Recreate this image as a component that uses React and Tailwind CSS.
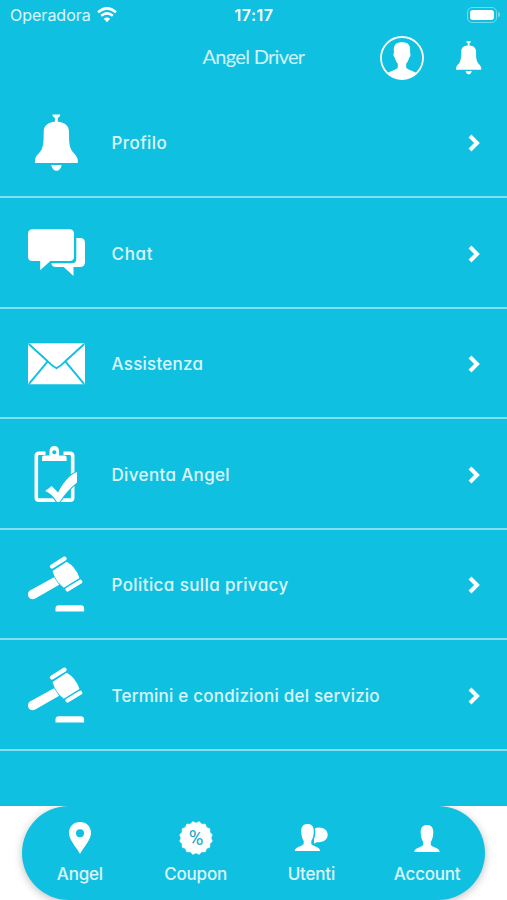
import { clsx } from 'clsx';

const BellIcon = ({ className }) => (
  <svg viewBox="0 0 58 58" fill="currentColor" className={className}>
    <path d="M24.3 0.5h8q0 2.2-2.5 3.5v3.7c7 .5 11 4 11.2 9.5.2 7-.4 13 2.3 18.500C45.500 40 49.800 42 49.800 46.500v2.500H7v-2.500c0-4.500 4.300-6.500 6.400-10.800 2.700-5.500 2.100-11.500 2.300-18.500.2-5.500 4.200-9 11.200-9.500V4q-2.600-1.300-2.600-3.500z" />
    <path d="M23.300 51h10.400c-.7 3.800-2.700 5.800-5.200 5.800S24 54.800 23.300 51z" />
  </svg>
);

const ChatIcon = ({ className }) => (
  <svg viewBox="0 0 58 58" fill="currentColor" className={className}>
    <path d="M48.300 13H52q5 0 5 5v19q0 5-5 5h-6.500v9l-9.800-9H28q-4.500 0-4.700-3.700h20.500q4.500 0 4.500-4.500z" />
    <path d="M4.500 4.200h37q4.500 0 4.500 4.500v22.800q0 4.500-4.500 4.500H22.300L12.200 45.300V36H4.500Q0 36 0 31.500V8.700Q0 4.200 4.500 4.200z" />
  </svg>
);

const MailIcon = ({ className }) => (
  <svg viewBox="0 0 58 58" className={className}>
    <rect y="8.300" width="57" height="41" rx="1.500" fill="currentColor" />
    <path d="M0.700 9l19 17.300q4.500 4.500 8.800 7 4.300-2.500 8.800-7L56.300 9M1 48.800l18.700-22.500M56 48.800L37.300 26.300" fill="none" stroke="#0fc0e1" strokeWidth="1.900" />
  </svg>
);

const ClipboardIcon = ({ className }) => (
  <svg viewBox="0 0 58 58" className={className}>
    <path d="M17.500 7.200H11q-2.700 0-2.700 2.700v41.500q0 2.700 2.700 2.700h31q2.700 0 2.700-2.700V9.900q0-2.700-2.700-2.700h-6.500" fill="none" stroke="currentColor" strokeWidth="3.600" />
    <path d="M14 15V11.500q0-2 2-2h5.500V5Q22 0 26.300 0t4.800 5v4.500h5.500q2 0 2 2V15z" fill="currentColor" />
    <circle cx="26.300" cy="6.300" r="2" fill="#0fc0e1" />
    <path d="M17.200 45l6.500-5 6.300 6.500c5.500-10.500 11.500-17.500 19-20.500v10.500C42 42 36.500 48.500 31.500 56H29C25.800 50.500 22 47 17.200 45z" fill="currentColor" stroke="#0fc0e1" strokeWidth="2.200" paintOrder="stroke" />
  </svg>
);

const GavelIcon = ({ className }) => (
  <svg viewBox="0 0 58 58" fill="currentColor" className={className}>
    <path d="M24.500 15L38.700 5.700Q48 11 51.500 22L35.800 31.700Q27.500 25.500 24.500 15z" />
    <path d="M24 10.500L36.500 2.600M39.500 33.500l12.700-7.700" fill="none" stroke="currentColor" strokeWidth="4.200" strokeLinecap="round" />
    <path d="M26 21.200l5.200 7.500L7.300 42.500q-4 2-6.500-1.300Q-1.500 37 2 34.500z" />
    <path d="M27.500 55.500v-3q0-3.300 3.300-3.300h22q3.300 0 3.300 3.300v3z" />
  </svg>
);

const PersonShape = () => (
  <path d="M13 0c4.200 0 6.400 2.500 6.300 7.500-.1 4.500-1.100 7.300-2.500 9.500v3c1.800 2.600 8.300 2.500 9 7H.2c.7-4.500 7.200-4.400 9-7v-3C7.800 14.800 6.800 12 6.700 7.500 6.600 2.500 8.800 0 13 0z" />
);

const AvatarIcon = ({ className }) => (
  <svg viewBox="0 0 44 44" className={className}>
    <clipPath id="avatar-clip">
      <circle cx="22" cy="22" r="21" />
    </clipPath>
    <circle cx="22" cy="22" r="21" fill="none" stroke="currentColor" strokeWidth="1.800" />
    <path clipPath="url(#avatar-clip)" fill="currentColor" d="M22 6.200c5.800 0 8.300 2.500 8.200 7.800l-.2 3c1 .5.500 4-.9 4.700-.6 2.800-1.700 4.500-2.900 6V31.500c1.500 3 8.800 3.500 11.800 7V44H6v-5.500c3-3.500 10.300-4 11.800-7v-3.800c-1.200-1.500-2.300-3.200-2.900-6-1.400-.7-1.900-4.200-.9-4.700l-.2-3c-.1-5.300 2.400-7.800 8.200-7.800z" />
  </svg>
);

const ChevronIcon = ({ className }) => (
  <svg viewBox="0 0 12 18" className={className}>
    <path d="M2 2l7 7-7 7" fill="none" stroke="currentColor" strokeWidth="4" />
  </svg>
);

const WifiIcon = ({ className }) => (
  <svg viewBox="0 0 20 16" className={className}>
    <path d="M1 5.300q9-7.800 18 0M4.200 8.800q5.800-4.800 11.600 0" fill="none" stroke="currentColor" strokeWidth="2.500" />
    <path d="M6.800 11.700q3.200-2.500 6.400 0L10 15.300z" fill="currentColor" />
  </svg>
);

const PinIcon = ({ className }) => (
  <svg viewBox="0 0 34 34" className={className}>
    <path fillRule="evenodd" fill="currentColor" d="M17 1c6.500 0 11 4.600 11 10.800C28 19 21.500 25 17 33 12.500 25 6 19 6 11.800 6 5.600 10.500 1 17 1zm0 7.200a4 4 0 1 0 0 8 4 4 0 0 0 0-8z" />
  </svg>
);

const CouponIcon = ({ className }) => {
  const points = Array.from({ length: 32 }, (_, i) => {
    const r = i % 2 ? 15 : 16.7;
    const a = ((i + 1) * Math.PI) / 16;
    return `${17 + r * Math.sin(a)},${17 - r * Math.cos(a)}`;
  }).join(' ');
  return (
    <svg viewBox="0 0 34 34" className={className}>
      <polygon points={points} fill="currentColor" stroke="currentColor" strokeWidth="0.500" strokeLinejoin="round" />
      <text x="17" y="23.500" textAnchor="middle" className="font-['Roboto',sans-serif] font-normal text-[20px] fill-[#0fa8c8]">%</text>
    </svg>
  );
};

const UsersIcon = ({ className }) => (
  <svg viewBox="0 0 34 34" fill="currentColor" className={className}>
    <g transform="translate(.5 3)">
      <PersonShape />
    </g>
    <path d="M20.800 7.500Q22.500 6.500 25 6.500c5 0 8.700 3 8.700 7.300s-3.700 7.400-8.700 7.400h-2.300L20 22.800V18q2.300-5 .8-10.500z" />
  </svg>
);

const AccountIcon = ({ className }) => (
  <svg viewBox="0 0 34 34" fill="currentColor" className={className}>
    <g transform="translate(4 4)">
      <PersonShape />
    </g>
  </svg>
);

const menuItems = [
  { label: 'Profilo', icon: BellIcon, tracking: 'tracking-[0.400px]' },
  { label: 'Chat', icon: ChatIcon, tracking: 'tracking-[0.700px]' },
  { label: 'Assistenza', icon: MailIcon, tracking: 'tracking-[0.250px]' },
  { label: 'Diventa Angel', icon: ClipboardIcon, tracking: 'tracking-[0.350px]' },
  { label: 'Politica sulla privacy', icon: GavelIcon, tracking: 'tracking-[0.400px]' },
  { label: 'Termini e condizioni del servizio', icon: GavelIcon, tracking: 'tracking-[0.220px]' },
];

const tabs = [
  { label: 'Angel', icon: PinIcon },
  { label: 'Coupon', icon: CouponIcon },
  { label: 'Utenti', icon: UsersIcon },
  { label: 'Account', icon: AccountIcon },
];

const StatusBar = () => (
  <div className="grid grid-cols-3 items-center h-[29px] pl-[10px] pr-[7px]">
    <div className="flex items-center gap-[6px] text-[16px] text-white/85 [font-feature-settings:normal]">
      Operadora
      <WifiIcon className="w-5 h-4 text-white" />
    </div>
    <div className="text-center text-[16px] font-semibold tracking-[0.5px] -ml-[2px]">17:17</div>
    <div className="flex items-center justify-end gap-px">
      <div className="w-[30px] h-[16px] border border-white/40 rounded-[5px] p-[2px]">
        <div className="h-full bg-white rounded-[3px]" />
      </div>
      <div className="w-[2px] h-[5px] bg-white/40 rounded-r-full" />
    </div>
  </div>
);

const Header = () => (
  <header className="grid grid-cols-[1fr_auto_1fr] items-center h-[57px] px-[25px]">
    <h1 className="col-start-2 pb-[3px] font-['Lato',sans-serif] font-normal text-[20px] tracking-[-0.700px] whitespace-nowrap text-white/80">
      Angel Driver
    </h1>
    <div className="flex items-center justify-end gap-[28px]">
      <AvatarIcon className="w-11 h-11" />
      <BellIcon className="w-[34px] h-[34px] -mr-[4px]" />
    </div>
  </header>
);

const MenuRow = ({ item }) => {
  const Icon = item.icon;
  return (
    <li className="flex items-center h-[110.500px] border-b-2 border-[#82def0] pt-[3px] pl-7 pr-[27px]">
      <Icon className="w-[58px] h-[58px] shrink-0" />
      <span className={clsx('ml-[25.500px] pt-px flex-1 text-[17px] font-[450] text-white/85 whitespace-nowrap', item.tracking)}>
        {item.label}
      </span>
      <ChevronIcon className="w-3 h-[18px]" />
    </li>
  );
};

const TabBar = () => (
  <nav className="bg-white h-[94px] px-[22px] overflow-hidden">
    <div className="grid grid-cols-4 h-[94px] rounded-full bg-[#0fc0e1] shadow-[0_2px_8px_rgba(0,0,0,0.25)]">
      {tabs.map(({ label, icon: Icon }) => (
        <div key={label} className="flex flex-col items-center pt-[15px]">
          <Icon className="w-[34px] h-[34px]" />
          <span className="mt-[7px] text-[17px] leading-6 font-[450] tracking-[-0.200px] text-white/85">{label}</span>
        </div>
      ))}
    </div>
  </nav>
);

export default function App() {
  return (
    <div className="flex flex-col w-full h-[900px] overflow-hidden bg-[#0fc0e1] text-white font-['Inter',sans-serif] [font-feature-settings:'cv11']">
      <StatusBar />
      <Header />
      <ul className="flex-1 pt-[1.500px]">
        {menuItems.map((item) => (
          <MenuRow key={item.label} item={item} />
        ))}
      </ul>
      <TabBar />
    </div>
  );
}
